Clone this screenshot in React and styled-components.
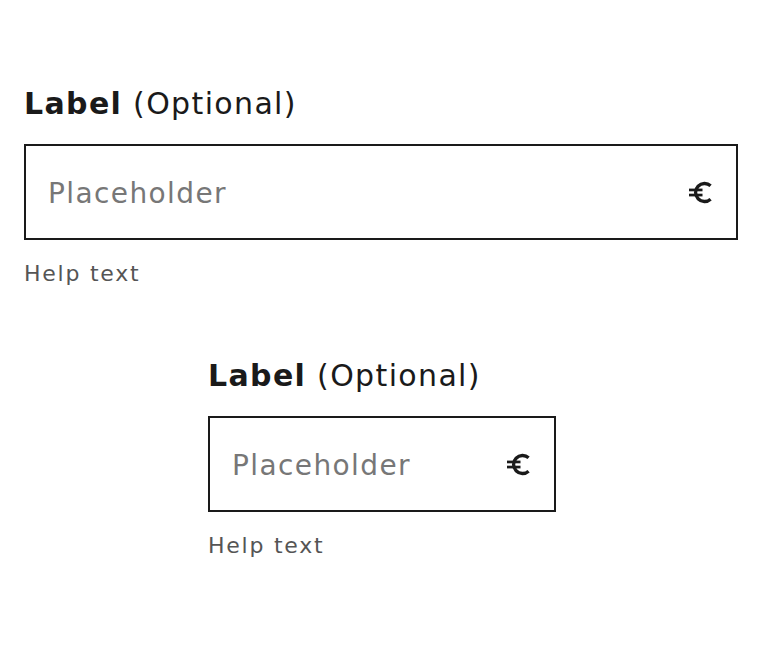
import styled, { createGlobalStyle } from "styled-components";

const GlobalStyle = createGlobalStyle`
  html, body {
    margin: 0;
    padding: 0;
    background: #fff;
  }
  body {
    font-family: "DejaVu Sans", "Liberation Sans", sans-serif;
    color: #1a1a1a;
  }
`;

const Page = styled.div`
  padding: 86px 24px 0;
  display: flex;
  flex-flow: column nowrap;
  gap: 70px;
`;

const Field = styled.div`
  display: flex;
  flex-flow: column nowrap;
  width: ${(p) => (p.$narrow ? "348px" : "100%")};
  margin-left: ${(p) => (p.$narrow ? "184px" : "0")};
`;

const Label = styled.label`
  font-size: 30px;
  line-height: 36px;
  letter-spacing: 0.045em;
  color: #1a1a1a;
  margin-bottom: 22px;

  strong {
    font-weight: 700;
  }
`;

const InputBox = styled.div`
  height: 96px;
  box-sizing: border-box;
  border: 2px solid #1a1a1a;
  padding: 0 22px 0 22px;
  display: flex;
  align-items: center;
  gap: 16px;
`;

const Input = styled.input`
  flex: 1;
  min-width: 0;
  border: none;
  outline: none;
  background: transparent;
  padding: 2px 0 0;
  font-family: inherit;
  font-size: 28px;
  letter-spacing: 0.05em;
  color: #1a1a1a;

  &::placeholder {
    color: #777;
  }
`;

const Currency = styled.svg`
  flex: none;
  width: 26px;
  height: 23px;
  color: #1a1a1a;
`;

const Help = styled.div`
  margin-top: 20px;
  font-size: 22px;
  line-height: 28px;
  letter-spacing: 0.08em;
  color: #555;
`;

const EuroIcon = () => (
  <Currency viewBox="0 0 26 23" aria-label="€">
    <path d="M22.6 4.8A9 9 0 1 0 22.6 18.2" fill="none" stroke="currentColor" strokeWidth="3.3" />
    <rect x="1" y="7.6" width="13.5" height="2.7" fill="currentColor" />
    <rect x="1" y="12.7" width="13.5" height="2.7" fill="currentColor" />
  </Currency>
);

const CurrencyField = ({ narrow }) => (
  <Field $narrow={narrow}>
    <Label>
      <strong>Label</strong> (Optional)
    </Label>
    <InputBox>
      <Input type="text" placeholder="Placeholder" />
      <EuroIcon />
    </InputBox>
    <Help>Help text</Help>
  </Field>
);

const App = () => (
  <>
    <GlobalStyle />
    <Page>
      <CurrencyField />
      <CurrencyField narrow />
    </Page>
  </>
);

export default App;
